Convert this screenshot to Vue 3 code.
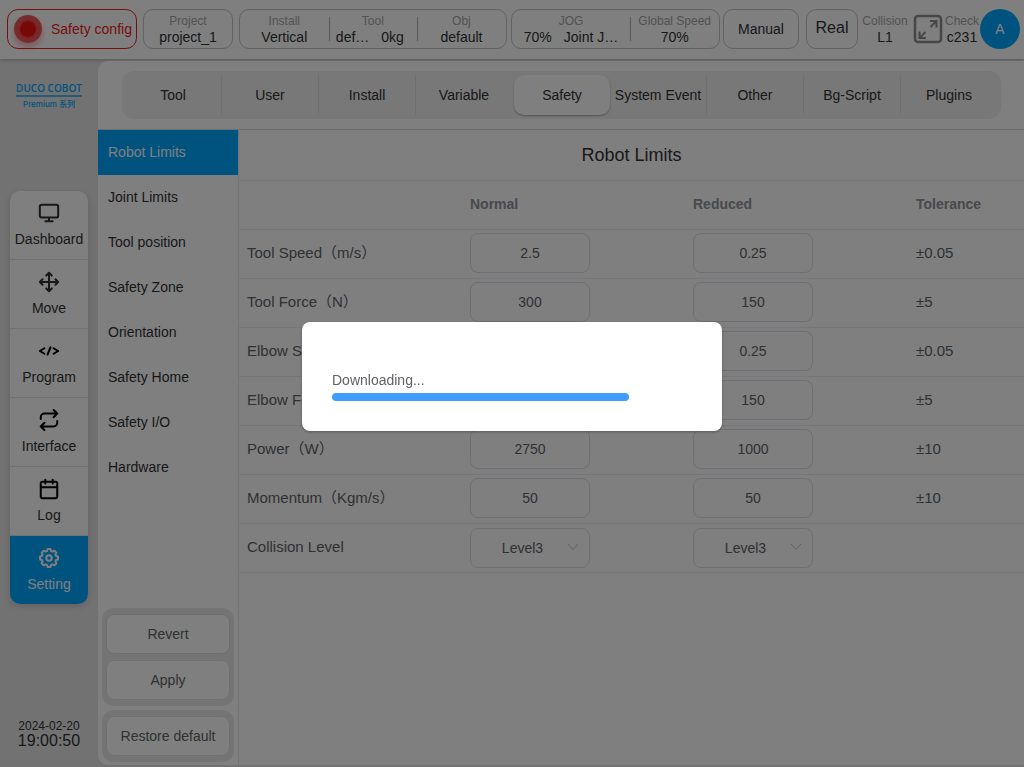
<script setup>
import { ref } from 'vue'

const tabs = ['Tool', 'User', 'Install', 'Variable', 'Safety', 'System Event', 'Other', 'Bg-Script', 'Plugins']
const activeTab = ref('Safety')

const sections = ['Robot Limits', 'Joint Limits', 'Tool position', 'Safety Zone', 'Orientation', 'Safety Home', 'Safety I/O', 'Hardware']
const activeSection = ref('Robot Limits')

// Outline of a cog with eight teeth around a round hole, in a 24 unit box.
function cogPath() {
  const corners = [[-16, 8], [-9, 9.9], [9, 9.9], [16, 8]]
  const points = []
  for (let tooth = 0; tooth < 8; tooth++) {
    for (const [offset, radius] of corners) {
      const angle = ((tooth * 45 + offset) * Math.PI) / 180
      points.push(`${(12 + radius * Math.cos(angle)).toFixed(2)} ${(12 + radius * Math.sin(angle)).toFixed(2)}`)
    }
  }
  return `M${points.join('L')}zM12 9a3 3 0 1 0 0 6 3 3 0 0 0 0-6z`
}

const nav = [
  { name: 'Dashboard', icon: 'M4 3h16a2 2 0 0 1 2 2v10a2 2 0 0 1-2 2H4a2 2 0 0 1-2-2V5a2 2 0 0 1 2-2zM8 21h8M12 17v4' },
  { name: 'Move', icon: 'M5 9l-3 3 3 3M9 5l3-3 3 3M15 19l-3 3-3-3M19 9l3 3-3 3M2 12h20M12 2v20' },
  { name: 'Program', icon: 'M7 9l-5 3 5 3M17 9l5 3-5 3M13.6 8l-3.2 8' },
  { name: 'Interface', icon: 'M17 1l4 4-4 4M3 11V9a4 4 0 0 1 4-4h14M7 23l-4-4 4-4M21 13v2a4 4 0 0 1-4 4H3' },
  { name: 'Log', icon: 'M5 4h14a2 2 0 0 1 2 2v14a2 2 0 0 1-2 2H5a2 2 0 0 1-2-2V6a2 2 0 0 1 2-2zM16 2v4M8 2v4M3 10h18' },
  { name: 'Setting', icon: cogPath() }
]
const activeNav = ref('Setting')

const limits = ref([
  { name: 'Tool Speed（m/s）', normal: '2.5', reduced: '0.25', tolerance: '±0.05' },
  { name: 'Tool Force（N）', normal: '300', reduced: '150', tolerance: '±5' },
  { name: 'Elbow Speed（m/s）', normal: '2.5', reduced: '0.25', tolerance: '±0.05' },
  { name: 'Elbow Force（N）', normal: '300', reduced: '150', tolerance: '±5' },
  { name: 'Power（W）', normal: '2750', reduced: '1000', tolerance: '±10' },
  { name: 'Momentum（Kgm/s）', normal: '50', reduced: '50', tolerance: '±10' }
])
const collision = ref({ Normal: 'Level3', Reduced: 'Level3' })
const levels = ['Level1', 'Level2', 'Level3', 'Level4', 'Level5']
const progress = ref(82.5)
</script>

<template>
  <div class="page">
    <header class="topbar">
      <button class="box alarm" type="button"><span class="lamp"></span>Safety config</button>
      <div class="box project">
        <div class="stat"><span class="label">Project</span><span class="value">project_1</span></div>
      </div>
      <div class="box setup">
        <div class="stat"><span class="label">Install</span><span class="value">Vertical</span></div>
        <div class="stat"><span class="label">Tool</span><span class="value pair tool-pair"><span>def…</span><span>0kg</span></span></div>
        <div class="stat"><span class="label">Obj</span><span class="value">default</span></div>
      </div>
      <div class="box motion">
        <div class="stat jog"><span class="label">JOG</span><span class="value pair"><span>70%</span><span>Joint J…</span></span></div>
        <div class="stat speed"><span class="label">Global Speed</span><span class="value">70%</span></div>
      </div>
      <button class="box manual" type="button">Manual</button>
      <button class="box real" type="button">Real</button>
      <div class="stat collision"><span class="label">Collision</span><span class="value">L1</span></div>
      <button class="expand" type="button" aria-label="Full screen">
        <svg viewBox="0 0 28 28" width="28" height="28" fill="none" stroke="currentColor" stroke-width="2">
          <rect x="1" y="1" width="26" height="26" rx="3" stroke-width="2.500" />
          <path d="M16 6h6.500v6.500M22 6.500l-5.500 5.500M5.500 16.500V23H12M6 22.500l5.500-5.500" />
        </svg>
      </button>
      <div class="stat check"><span class="label">Check</span><span class="value">c231</span></div>
      <button class="avatar" type="button">A</button>
    </header>

    <div class="body">
      <aside class="side">
        <div class="logo">
          <span class="brand">DUCO COBOT</span>
          <span class="series">Premium 系列</span>
        </div>
        <nav class="nav">
          <button v-for="item in nav" :key="item.name" type="button" class="nav-item"
            :class="[item.name.toLowerCase(), { active: activeNav === item.name }]" @click="activeNav = item.name">
            <svg viewBox="0 0 24 24" width="22" height="22" fill="none" stroke="currentColor" stroke-width="2.200" stroke-linecap="round" stroke-linejoin="round">
              <path :d="item.icon" />
            </svg>
            <span>{{ item.name }}</span>
          </button>
        </nav>
        <div class="clock"><span class="date">2024-02-20</span><time class="time">19:00:50</time></div>
      </aside>

      <main class="main">
        <div class="tab-area">
          <nav class="tabs">
            <button v-for="tab in tabs" :key="tab" type="button" class="tab" :class="{ active: activeTab === tab }" @click="activeTab = tab">{{ tab }}</button>
          </nav>
        </div>
        <div class="workspace">
          <aside class="sections">
            <button v-for="s in sections" :key="s" type="button" class="section" :class="{ active: activeSection === s }" @click="activeSection = s">{{ s }}</button>
            <div class="actions first">
              <button type="button" class="action">Revert</button>
              <button type="button" class="action">Apply</button>
            </div>
            <div class="actions">
              <button type="button" class="action">Restore default</button>
            </div>
          </aside>
          <section class="content">
            <h1 class="title">Robot Limits</h1>
            <table class="limits">
              <colgroup><col class="col"><col class="col"><col class="col"><col></colgroup>
              <thead>
                <tr><th></th><th>Normal</th><th>Reduced</th><th>Tolerance</th></tr>
              </thead>
              <tbody>
                <tr v-for="row in limits" :key="row.name">
                  <td>{{ row.name }}</td>
                  <td><input v-model="row.normal" class="field" type="text" :aria-label="row.name + ' normal'"></td>
                  <td><input v-model="row.reduced" class="field" type="text" :aria-label="row.name + ' reduced'"></td>
                  <td>{{ row.tolerance }}</td>
                </tr>
                <tr class="levels">
                  <td>Collision Level</td>
                  <td v-for="(level, key) in collision" :key="key">
                    <div class="select-wrap">
                      <select v-model="collision[key]" class="field select" :aria-label="'Collision Level ' + key">
                        <option v-for="l in levels" :key="l">{{ l }}</option>
                      </select>
                      <svg class="arrow" viewBox="0 0 12 8" width="12" height="8" fill="none" stroke="currentColor" stroke-linecap="round"><path d="M1 1l5 5.500L11 1" /></svg>
                    </div>
                  </td>
                  <td></td>
                </tr>
              </tbody>
            </table>
          </section>
        </div>
      </main>
    </div>

    <div class="overlay">
      <div class="dialog" role="dialog" aria-modal="true" aria-labelledby="download-label">
        <div id="download-label" class="dialog-text">Downloading...</div>
        <div class="track" role="progressbar" aria-labelledby="download-label" :aria-valuenow="progress" aria-valuemin="0" aria-valuemax="100">
          <div class="bar" :style="{ width: progress + '%' }"></div>
        </div>
      </div>
    </div>
  </div>
</template>

<style>
body {
  margin: 0;
}
</style>

<style scoped>
.page {
  display: flex;
  flex-direction: column;
  min-height: 100vh;
  background: #e4e4e4;
  color: #303133;
  font: 14px/16px "Liberation Sans", "Noto Sans CJK SC", sans-serif;
}
.page * {
  box-sizing: border-box;
}
button,
input,
select {
  margin: 0;
  padding: 0;
  border: 0;
  background: none;
  color: inherit;
  font: inherit;
}

.topbar {
  display: flex;
  align-items: center;
  height: 59px;
  padding: 0 4px 1px 7px;
  background: #fff;
  box-shadow: 0 1px 4px rgba(0, 0, 0, 0.25);
  white-space: nowrap;
}
.box {
  display: flex;
  align-items: center;
  justify-content: center;
  height: 40px;
  border: 1px solid #c4c4c4;
  border-radius: 10px;
}
.alarm {
  width: 130px;
  justify-content: flex-start;
  gap: 9px;
  padding-left: 6px;
  border-color: #f02020;
  border-radius: 11px;
  color: #f02020;
}
.lamp {
  width: 28px;
  height: 28px;
  border-radius: 50%;
  background: radial-gradient(circle, #f01010 7px, #f05050 9px, #f05a5a 14px);
  box-shadow: 0 4px 6px rgba(240, 32, 32, 0.35);
}
.project {
  width: 90px;
  margin-left: 6px;
}
.setup {
  flex: 268 1 0;
  margin-left: 6px;
}
.motion {
  flex: 209 1 0;
  margin-left: 4px;
}
.manual {
  width: 76px;
  margin-left: 3px;
}
.real {
  width: 52px;
  margin-left: 7px;
  padding-bottom: 2px;
  font-size: 16px;
}
.stat {
  display: flex;
  flex-direction: column;
  align-items: center;
}
.setup .stat,
.motion .stat {
  position: relative;
  flex: 1;
}
.motion .jog {
  flex: 119 1 0;
}
.motion .speed {
  flex: 89 1 0;
}
.setup .stat + .stat::before,
.motion .stat + .stat::before {
  content: "";
  position: absolute;
  left: 0;
  top: 4px;
  width: 1px;
  height: 24px;
  background: #b4b4b4;
}
.label {
  color: #a4a4a4;
  font-size: 12px;
}
.pair {
  display: flex;
  gap: 12px;
}
.tool-pair {
  padding-right: 6px;
}
.collision {
  width: 46px;
  margin-left: 4px;
}
.expand {
  width: 28px;
  height: 28px;
  margin-left: 6px;
  color: #8c8c8c;
}
.expand svg {
  display: block;
  overflow: visible;
}
.check {
  width: 34px;
  margin-left: 3px;
}
.avatar {
  width: 40px;
  height: 40px;
  margin-left: 1px;
  border-radius: 50%;
  background: #00a6ff;
  color: #fff;
}

.body {
  display: flex;
  flex: 1;
  padding: 2px 0;
}
.side {
  display: flex;
  flex-direction: column;
  align-items: center;
  width: 98px;
  padding: 21px 0 16px;
}
.logo {
  display: flex;
  flex-direction: column;
  align-items: center;
  height: 109px;
  color: #00a6ff;
  white-space: nowrap;
}
.brand {
  padding-bottom: 1px;
  border-bottom: 2px solid #44b8f4;
  font: 600 10px/12px "Open Sans", sans-serif;
}
.series {
  margin-top: 1px;
  font: 500 8px/12px Inter, "Noto Sans CJK SC", sans-serif;
}
.nav {
  width: 78px;
  border-radius: 10px;
  background: #fff;
  box-shadow: 0 2px 6px rgba(0, 0, 0, 0.15);
  overflow: hidden;
}
.nav-item {
  display: flex;
  flex-direction: column;
  align-items: center;
  gap: 7px;
  width: 100%;
  height: 69px;
  padding-top: 11px;
  border-bottom: 1px solid #e4e4e4;
}
.program,
.interface,
.log {
  color: #000;
}
.nav-item span {
  color: #303133;
}
.nav-item.active,
.nav-item.active span {
  color: #fff;
}
.nav-item.active {
  height: 68px;
  border-bottom: 0;
  background: #00a6ff;
}
.clock {
  display: flex;
  flex-direction: column;
  align-items: center;
  margin-top: auto;
}
.date {
  font-size: 12px;
  line-height: 14px;
}
.time {
  font-size: 16px;
}

.main {
  display: flex;
  flex: 1;
  flex-direction: column;
  min-width: 0;
  border-radius: 10px 0 0 10px;
  background: #fff;
}
.tab-area {
  padding: 10px 23px 10px 24px;
  border-bottom: 1px solid #d8dce5;
}
.tabs {
  display: grid;
  grid-template-columns: repeat(9, minmax(0, 1fr));
  height: 48px;
  padding: 4px 3px;
  border-radius: 12px;
  background: #f0f0f0;
}
.tab {
  border-right: 1px solid #dedede;
  white-space: nowrap;
}
.tab:last-child,
.tab:has(+ .active) {
  border-right-color: transparent;
}
.tab.active {
  margin-left: 1px;
  border: 0;
  border-radius: 10px;
  background: #fff;
  box-shadow: 0 1px 2px rgba(0, 0, 0, 0.3);
}
.workspace {
  display: flex;
  flex: 1;
}
.sections {
  display: flex;
  flex-direction: column;
  width: 140px;
}
.section {
  height: 45px;
  padding: 0 0 2px 10px;
  text-align: left;
}
.section.active {
  background: #00a6ff;
  color: #fff;
}
.actions {
  display: flex;
  flex-direction: column;
  gap: 6px;
  margin: 0 4px 3px;
  padding: 6px 4px;
  border-radius: 12px;
  background: #e9e9e9;
}
.actions.first {
  margin-top: auto;
  margin-bottom: 4px;
}
.action {
  height: 40px;
  border: 1px solid #dcdfe6;
  border-radius: 8px;
  background: #fff;
  color: #606266;
}
.content {
  flex: 1;
  min-width: 0;
  border-left: 1px solid #e4e7ed;
}
.title {
  margin: 0;
  border-bottom: 1px solid #ebeef5;
  font-size: 18px;
  font-weight: 400;
  line-height: 50px;
  text-align: center;
}
.limits {
  width: 100%;
  border-spacing: 0;
  table-layout: fixed;
  color: #606266;
  font-size: 15px;
}
.col {
  width: 223px;
}
th,
td {
  height: 49px;
  padding: 3px 8px 5px;
  border-bottom: 1px solid #ebeef5;
  text-align: left;
  white-space: nowrap;
}
th {
  color: #909399;
  font-size: 14px;
}
.levels td:has(.select-wrap) {
  padding: 4px 8px;
}
.field {
  display: block;
  width: 120px;
  height: 40px;
  border: 1px solid #dcdfe6;
  border-radius: 8px;
  color: #606266;
  font-size: 14px;
  text-align: center;
}
.select-wrap {
  position: relative;
  width: 120px;
}
.select {
  padding-right: 15px;
  appearance: none;
  text-align-last: center;
}
.arrow {
  position: absolute;
  top: 15px;
  right: 11px;
  color: #c0c4cc;
  pointer-events: none;
}

.overlay {
  position: fixed;
  inset: 0;
  display: flex;
  align-items: center;
  justify-content: center;
  padding-bottom: 14px;
  background: rgba(0, 0, 0, 0.5);
}
.dialog {
  width: 420px;
  padding: 50px 30px 30px;
  border-radius: 8px;
  background: #fff;
  box-shadow: 0 1px 3px rgba(0, 0, 0, 0.3);
}
.dialog-text {
  margin-bottom: 5px;
  color: #606266;
}
.track {
  height: 8px;
}
.bar {
  height: 100%;
  border-radius: 4px;
  background: #409eff;
}
</style>
